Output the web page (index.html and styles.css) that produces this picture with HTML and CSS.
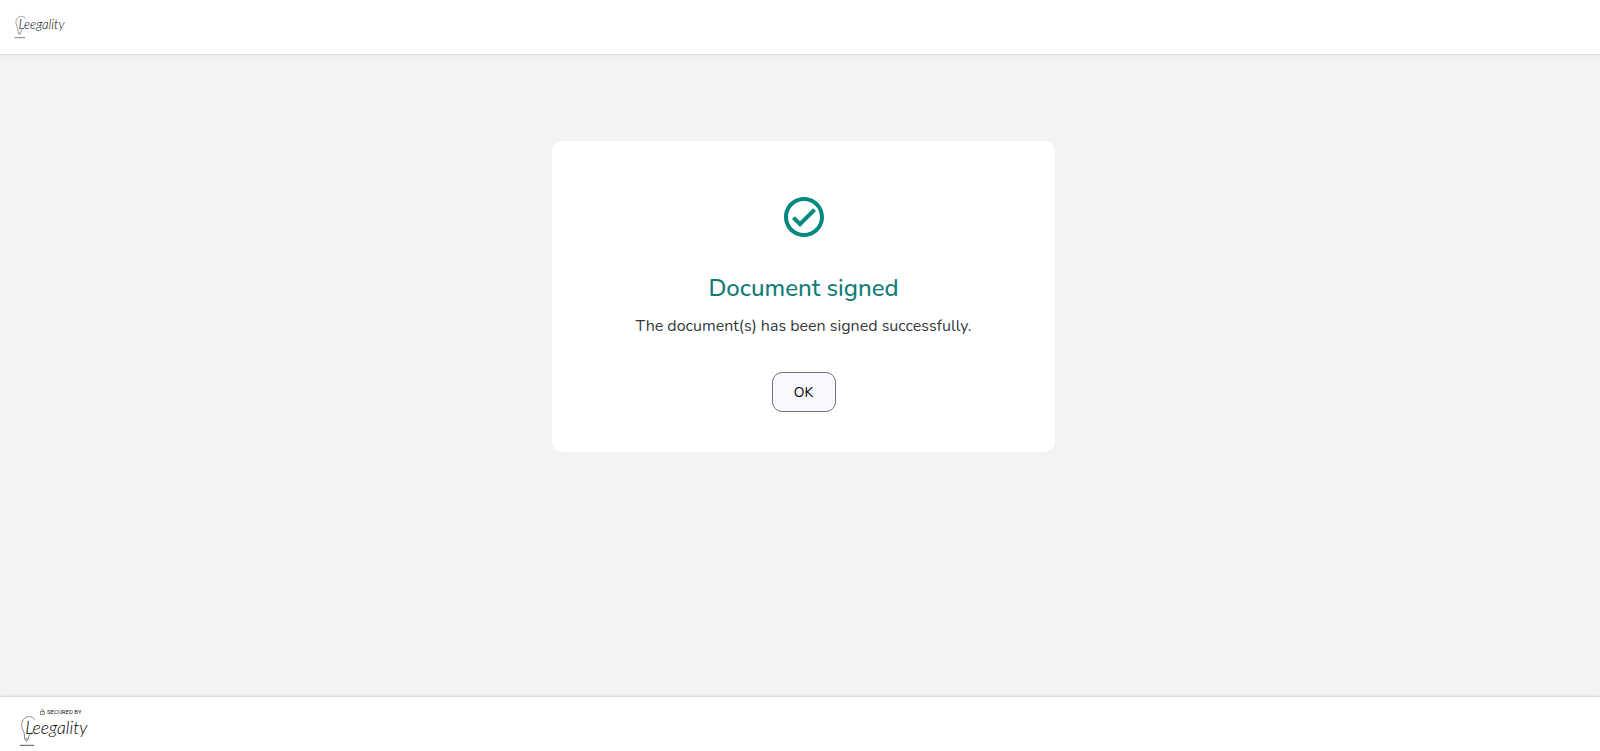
FILE: index.html
```html
<!DOCTYPE html>
<html lang="en">
<head>
<meta charset="utf-8">
<meta name="viewport" content="width=device-width, initial-scale=1">
<title>Document signed</title>
<link rel="stylesheet" href="styles.css">
</head>
<body>
<header class="topbar">
  <svg class="logo logo-small" viewBox="0 0 206 96" role="img" aria-label="Leegality">
    <path class="bulb" d="M46 14C42 3 22 1 13 13C5 24 7 38 13 49C17 56 15 63 17 72L22 80L27 72C28 62 34 54 42 50M17 72H27"/>
    <path class="base" d="M2 91H45"/>
    <text class="wordmark" x="18" y="56" font-size="53">Leegality</text>
  </svg>
</header>
<main class="page">
  <section class="card">
    <svg class="check" viewBox="0 0 24 24" aria-hidden="true"><path d="M16.59 7.58 10 14.17l-2.59-2.58L6 13l4 4 8-8zM12 2C6.48 2 2 6.48 2 12s4.48 10 10 10 10-4.48 10-10S17.52 2 12 2zm0 18c-4.42 0-8-3.58-8-8s3.58-8 8-8 8 3.58 8 8-3.58 8-8 8z"/></svg>
    <h1 class="title">Document signed</h1>
    <p class="message">The document(s) has been signed successfully.</p>
    <button class="ok" type="button">OK</button>
  </section>
</main>
<footer class="bottombar">
  <div class="secured">
    <svg class="lock" viewBox="0 0 10 12" aria-hidden="true"><path d="M3 5V3a2 2 0 0 1 4 0v2M1 5h8v6H1zM5 7v2"/></svg>
    <span>SECURED BY</span>
  </div>
  <svg class="logo" viewBox="0 0 206 96" role="img" aria-label="Leegality">
    <path class="bulb" d="M46 14C42 3 22 1 13 13C5 24 7 38 13 49C17 56 15 63 17 72L22 80L27 72C28 62 34 54 42 50M17 72H27"/>
    <path class="base" d="M2 91H45"/>
    <text class="wordmark" x="18" y="56" font-size="53">Leegality</text>
  </svg>
</footer>
</body>
</html>
```
FILE: styles.css
```css
* { box-sizing: border-box; }
body {
  margin: 0;
  min-height: 100vh;
  display: flex;
  flex-direction: column;
  background: #f3f3f3;
  font-family: Nunito, Lato, "Open Sans", sans-serif;
  color: #343a40;
}
.topbar {
  height: 55px;
  padding: 15px 14px;
  background: #fff;
  border-bottom: 1px solid #dcdee2;
  box-shadow: 0 1px 2px #e4e6ea;
}
.page {
  flex: 1;
  display: flex;
  justify-content: center;
  align-items: flex-start;
  padding: 86px 16px 16px 23px;
}
.card {
  width: 100%;
  max-width: 503px;
  padding: 52px 24px 40px;
  display: flex;
  flex-direction: column;
  align-items: center;
  background: #fff;
  border-radius: 10px;
  text-align: center;
}
.check { width: 48px; height: 48px; fill: #048880; }
.title {
  margin: 29px 0 0;
  font-size: 24px;
  line-height: 36px;
  font-weight: 500;
  color: #107c77;
}
.message { margin: 8px 0 0; font-size: 16px; line-height: 24px; }
.ok {
  width: 64px;
  height: 40px;
  margin-top: 34px;
  padding: 0;
  border: 1px solid #6c757d;
  border-radius: 10px;
  background: #f8f9ff;
  font: inherit;
  font-size: 14px;
  color: #000;
}
.bottombar {
  height: 55px;
  padding: 12px 19px 0;
  background: #fff;
  border-top: 1px solid #dcdee2;
  box-shadow: 0 -1px 2px #e4e6ea;
}
.logo { display: block; width: 69px; height: 32px; overflow: visible; }
.logo-small { width: 51px; height: 24px; }
.bulb, .base { fill: none; stroke: #888; stroke-width: 3; }
.base { stroke: #555; }
.wordmark { font-family: Lato, sans-serif; font-style: italic; font-weight: 300; fill: #000; }
.secured {
  display: flex;
  align-items: center;
  gap: 2px;
  height: 6px;
  padding-left: 21px;
  font-family: Roboto, sans-serif;
  font-size: 6px;
  line-height: 6px;
  color: #222;
}
.lock { width: 5px; height: 6px; fill: none; stroke: #222; stroke-width: 1; }
```
